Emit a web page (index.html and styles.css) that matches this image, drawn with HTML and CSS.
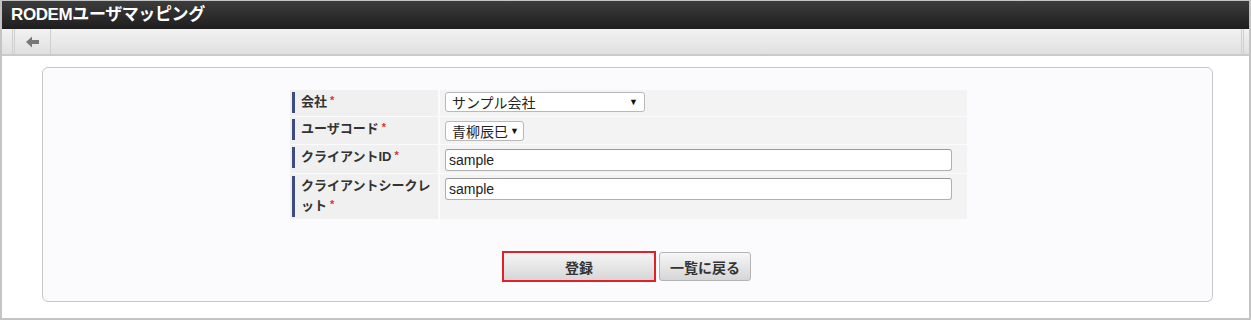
FILE: index.html
```html
<!DOCTYPE html>
<html lang="ja">
<head>
  <meta charset="UTF-8" />
  <title>RODEMユーザマッピング</title>
  <link rel="stylesheet" href="styles.css">
</head>
<body>
  <div class="frame">
    <div class="title-bar">RODEMユーザマッピング</div>
    <div class="toolbar">
      <div class="tool-btn">
        <svg width="14" height="12" viewBox="0 0 14 12"><path d="M0 6 L6 0.5 L6 4 L13 4 L13 8 L6 8 L6 11.5 Z" fill="#777"/></svg>
      </div>
      <div class="tool-end"></div>
    </div>
    <div class="content">
      <div class="card">
        <table class="form-table">
          <tr class="row-1">
            <th><span class="label">会社<span class="req">*</span></span></th>
            <td><div class="select select-wide"><span>サンプル会社</span><span class="arrow">▼</span></div></td>
          </tr>
          <tr class="row-2">
            <th><span class="label">ユーザコード<span class="req">*</span></span></th>
            <td><div class="select select-narrow"><span>青柳辰巳</span><span class="arrow">▼</span></div></td>
          </tr>
          <tr class="row-3">
            <th><span class="label">クライアントID<span class="req">*</span></span></th>
            <td><input class="text" type="text" value="sample"></td>
          </tr>
          <tr class="row-4">
            <th><span class="label">クライアントシークレット<span class="req">*</span></span></th>
            <td><input class="text" type="text" value="sample"></td>
          </tr>
        </table>
        <div class="actions">
          <button class="btn btn-submit">登録</button>
          <button class="btn btn-back">一覧に戻る</button>
        </div>
      </div>
    </div>
  </div>
</body>
</html>
```

FILE: styles.css
```css
* {
  box-sizing: border-box;
}

body {
  margin: 0;
  background-color: #fff;
  font-family: "Liberation Sans", "Noto Sans CJK JP", sans-serif;
  color: #333;
}

.frame {
  width: 1251px;
  height: 320px;
  border: 2px solid #c4c4c4;
  border-top-width: 1px;
  display: flex;
  flex-direction: column;
  overflow: hidden;
}

.title-bar {
  height: 28px;
  background: linear-gradient(#3c3c3c, #1e1e1e);
  color: #fff;
  font-weight: bold;
  font-size: 17px;
  line-height: 28px;
  padding-left: 9px;
  letter-spacing: -0.4px;
}

.toolbar {
  height: 27px;
  background: linear-gradient(#f2f2f2, #e0e0e0);
  border-bottom: 2px solid #cacaca;
  display: flex;
  justify-content: space-between;
  padding-left: 10px;
}

.tool-btn {
  width: 39px;
  border-left: 3px double #cfcfcf;
  border-right: 1px solid #cfcfcf;
  display: flex;
  align-items: center;
  justify-content: center;
}

.tool-end {
  width: 6px;
  margin-right: 2px;
  border-left: 3px double #cfcfcf;
}

.content {
  flex: 1;
  padding: 11px 36px 0 40px;
}

.card {
  height: 235px;
  background-color: #fbfbfd;
  border: 1px solid #c8c8c8;
  border-radius: 6px;
  padding-top: 21px;
}

.form-table {
  border-collapse: separate;
  border-spacing: 0 1px;
  margin-left: 247px;
  width: 677px;
}

.form-table th {
  width: 150px;
  background-color: #f0f0f0;
  text-align: left;
  vertical-align: top;
  padding: 2px 0 0 0;
  border-right: 2px solid #fbfbfd;
}

.form-table th .label {
  display: block;
  border-left: 3px solid #3d4b7f;
  margin-left: 2px;
  padding: 0 6px 1px 6px;
  font-size: 13px;
  font-weight: bold;
  line-height: 20px;
  color: #333;
}

.req {
  color: #e03030;
  font-size: 11px;
  line-height: 1;
  margin-left: 3px;
  position: relative;
  top: -2px;
}

.form-table td {
  background-color: #f3f3f3;
  vertical-align: top;
  padding: 2px 14px 0 5px;
}

.row-1 th, .row-1 td { height: 26px; }
.row-2 th, .row-2 td { height: 27px; }
.row-3 th, .row-3 td { height: 28px; }
.row-4 th, .row-4 td { height: 45px; }

.row-2 td { padding-top: 4px; }
.row-3 td { padding-top: 4px; }
.row-4 td { padding-top: 4px; }

.select {
  display: flex;
  justify-content: space-between;
  align-items: center;
  height: 20px;
  background-color: #fff;
  border: 1px solid #b8b8b8;
  border-radius: 3px;
  padding: 0 6px 0 6px;
  font-size: 14px;
  color: #222;
}

.select-wide {
  width: 200px;
}

.select-narrow {
  width: 79px;
  padding-right: 4px;
}

.arrow {
  font-size: 9px;
  color: #111;
}

.text {
  display: block;
  width: 507px;
  height: 22px;
  border: 1px solid #b0b0b0;
  border-top-color: #999;
  border-radius: 3px;
  padding: 0 3px;
  font-family: "Liberation Sans", sans-serif;
  font-size: 14px;
  color: #222;
  background-color: #fff;
}

.actions {
  display: flex;
  gap: 3px;
  margin-top: 31px;
  margin-left: 459px;
}

.btn {
  font-family: "Liberation Sans", "Noto Sans CJK JP", sans-serif;
  font-weight: bold;
  font-size: 14px;
  color: #333;
  background: linear-gradient(#f6f6f6, #d6d6d6);
  border: 1px solid #b4b4b4;
  border-radius: 3px;
  height: 29px;
  cursor: pointer;
}

.btn-submit {
  width: 154px;
  border: 2px solid #e2202a;
  border-radius: 0;
  height: 31px;
}

.btn-back {
  width: 92px;
  margin-top: 1px;
}
```
